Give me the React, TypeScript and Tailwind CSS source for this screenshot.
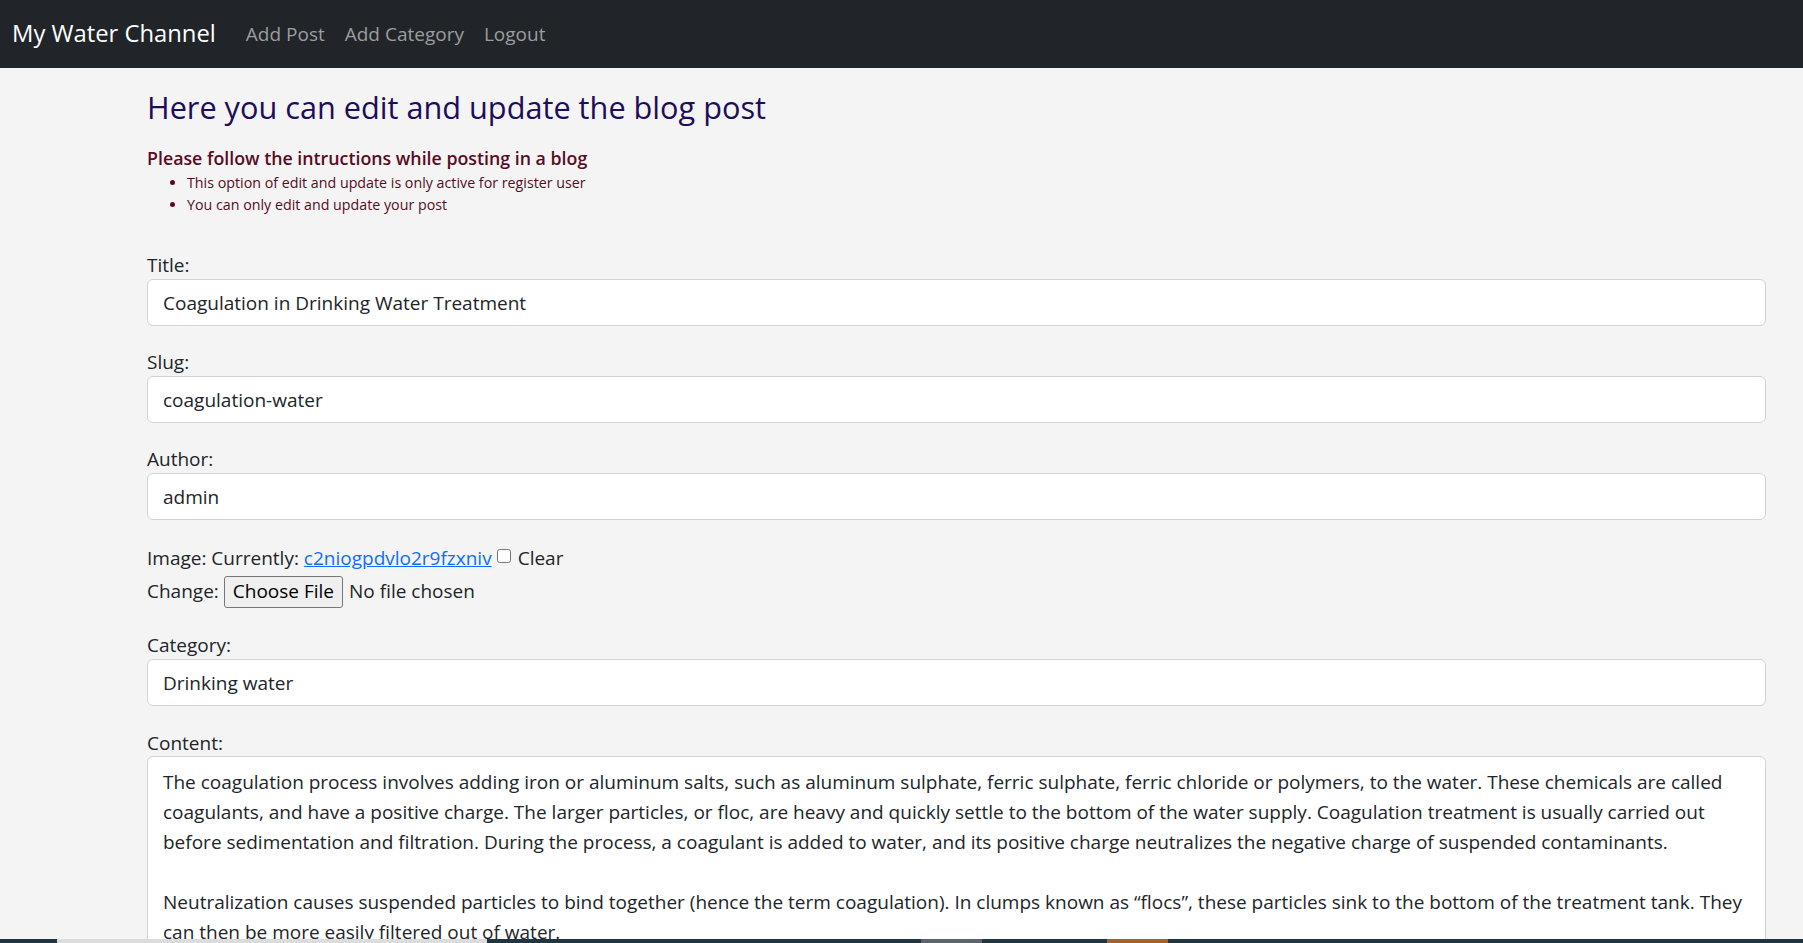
import React from "react";

const contentLines = [
  "The coagulation process involves adding iron or aluminum salts, such as aluminum sulphate, ferric sulphate, ferric chloride or polymers, to the water. These chemicals are called",
  "coagulants, and have a positive charge. The larger particles, or floc, are heavy and quickly settle to the bottom of the water supply. Coagulation treatment is usually carried out",
  "before sedimentation and filtration. During the process, a coagulant is added to water, and its positive charge neutralizes the negative charge of suspended contaminants.",
  "",
  "Neutralization causes suspended particles to bind together (hence the term coagulation). In clumps known as \u201cflocs\u201d, these particles sink to the bottom of the treatment tank. They",
  "can then be more easily filtered out of water.",
];

function Field({ label, value }: { label: string; value: string }) {
  return (
    <div className="mb-[20px]">
      <label className="block h-[30px] leading-[33px]">{label}</label>
      <input
        readOnly
        value={value}
        className="block h-[47px] w-full rounded-[6px] border border-[#ced4da] bg-white px-[15px] text-[19px] text-[#212529] outline-none"
      />
    </div>
  );
}

export default function App() {
  return (
    <div className="flex h-[943px] flex-col overflow-hidden bg-[#f4f4f4] font-['Open_Sans',sans-serif] text-[19px] text-[#212529]">
      <nav className="flex h-[68px] shrink-0 items-center bg-[#212529] px-3">
        <a href="#" className="mr-5 text-[23.8px] text-white">
          My Water Channel
        </a>
        <a href="#" className="px-2.5 text-[#9b9d9f]">Add Post</a>
        <a href="#" className="px-2.5 text-[#9b9d9f]">Add Category</a>
        <a href="#" className="px-2.5 text-[#9b9d9f]">Logout</a>
      </nav>

      <main className="min-h-0 flex-1 overflow-hidden pl-[147px] pr-[37px] pt-5">
        <h1 className="h-[38px] text-[30.7px] font-medium leading-[38px] text-[#1d0d5b]">
          Here you can edit and update the blog post
        </h1>
        <h6 className="mt-[19px] text-[17.8px] font-semibold leading-[27px] text-[#5a0b22]">
          Please follow the intructions while posting in a blog
        </h6>
        <ul className="list-disc pl-[40px] text-[14.25px] leading-[22px] text-[#5a0b22]">
          <li>This option of edit and update is only active for register user</li>
          <li>You can only edit and update your post</li>
        </ul>

        <form className="mt-[33px]">
          <Field label="Title:" value="Coagulation in Drinking Water Treatment" />
          <Field label="Slug:" value="coagulation-water" />
          <Field label="Author:" value="admin" />

          <div className="flex h-[34px] items-center pt-[3px]">
            <span>Image: Currently:&nbsp;</span>
            <a href="#" className="text-[#0d6efd] underline">c2niogpdvlo2r9fzxniv</a>
            <input type="checkbox" className="mb-[6px] ml-[5px] mr-[7px] h-[14px] w-[14px]" />
            <span>Clear</span>
          </div>
          <div className="flex h-[34px] items-center pt-[1px]">
            <span className="mr-[5px]">Change:</span>
            <button
              type="button"
              className="h-[32px] rounded-[3px] border border-[#767676] bg-[#efefef] px-[8px] leading-none text-black"
            >
              Choose File
            </button>
            <span className="ml-[6px]">No file chosen</span>
          </div>

          <div className="mt-[21px]">
            <Field label="Category:" value="Drinking water" />
          </div>

          <label className="block h-[30px] leading-[34px]">Content:</label>
          <textarea
            readOnly
            wrap="off"
            value={contentLines.join("\n")}
            className="block h-[300px] w-full resize-none overflow-hidden whitespace-pre rounded-[6px] border border-[#ced4da] bg-white px-[15px] py-[10px] text-[19px] leading-[30px] text-[#212529] outline-none"
          />
        </form>
      </main>

      <div className="flex h-[4px] shrink-0">
        <div className="w-[57px] bg-[#1f3640]" />
        <div className="w-[430px] bg-[#dcdcdc]" />
        <div className="w-[434px] bg-[#1f3640]" />
        <div className="w-[61px] bg-[#5b6569]" />
        <div className="w-[125px] bg-[#1f3640]" />
        <div className="w-[61px] bg-[#a3612b]" />
        <div className="flex-1 bg-[#1f3640]" />
      </div>
    </div>
  );
}
